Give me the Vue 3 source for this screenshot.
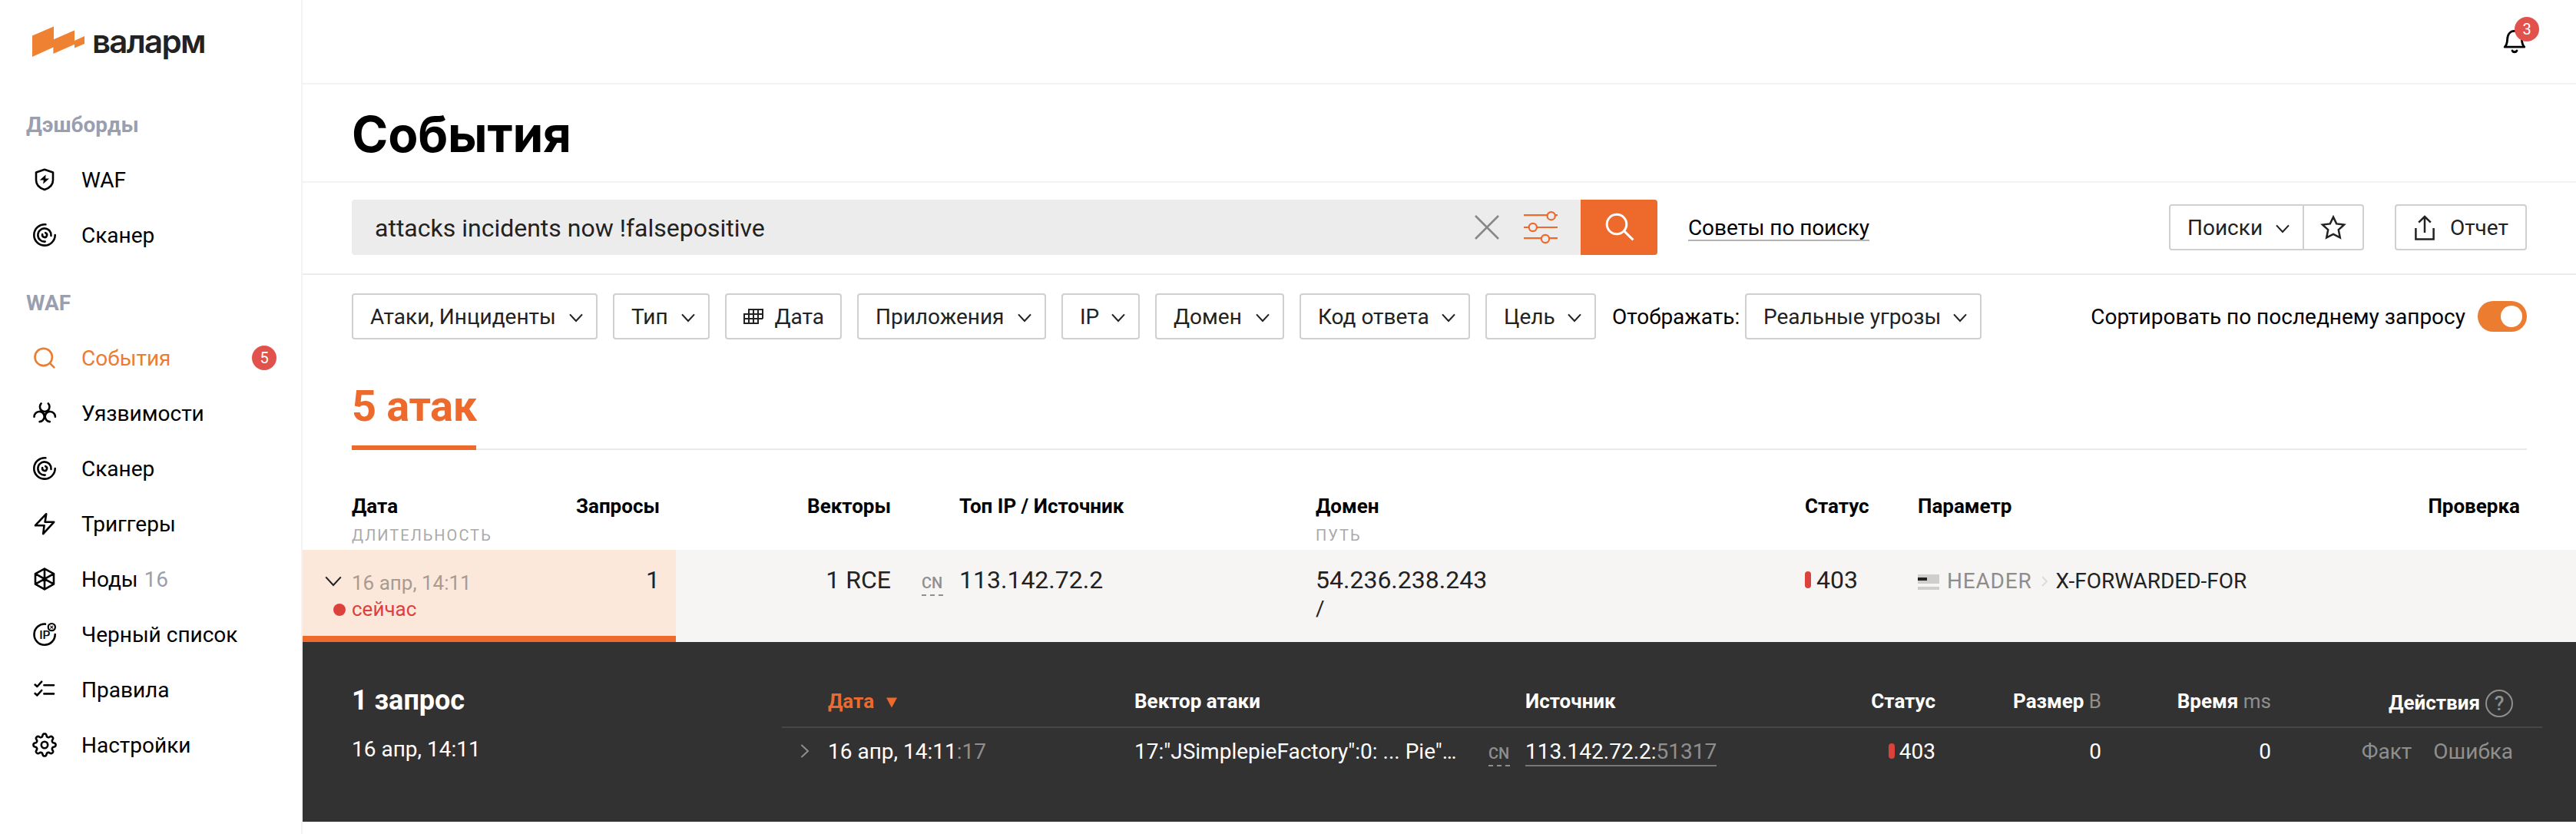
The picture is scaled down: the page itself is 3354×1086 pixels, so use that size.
<script setup>
const sections = [
  {
    title: 'Дэшборды',
    items: [
      { icon: 'shield', label: 'WAF' },
      { icon: 'scanner', label: 'Сканер' },
    ],
  },
  {
    title: 'WAF',
    items: [
      { icon: 'search', label: 'События', active: true, badge: 5 },
      { icon: 'bio', label: 'Уязвимости' },
      { icon: 'scanner', label: 'Сканер' },
      { icon: 'bolt', label: 'Триггеры' },
      { icon: 'nodes', label: 'Ноды', count: 16 },
      { icon: 'blacklist', label: 'Черный список' },
      { icon: 'rules', label: 'Правила' },
      { icon: 'gear', label: 'Настройки' },
    ],
  },
]

const filters = [
  { label: 'Атаки, Инциденты', cls: 'w-type' },
  { label: 'Тип', cls: 'w-kind' },
  { label: 'Дата', cls: 'w-date', calendar: true },
  { label: 'Приложения', cls: 'w-apps' },
  { label: 'IP', cls: 'w-ip' },
  { label: 'Домен', cls: 'w-domain' },
  { label: 'Код ответа', cls: 'w-code' },
  { label: 'Цель', cls: 'w-target' },
]

const strokes = {
  shield: 'M16 2.8 27 6.4V16.4C27 22.6 22.4 26.8 16 29 9.6 26.8 5 22.6 5 16.4V6.4Z',
  scanner:
    'M17.4 2.3A13.7 13.7 0 1 0 29.7 16M24.5 17A8.6 8.6 0 1 0 16.6 24.6M17.2 13.2A3 3 0 1 1 13.2 15.2',
  search: 'M25.9 14.9A11.2 11.2 0 1 1 3.5 14.9 11.2 11.2 0 1 1 25.9 14.9M22.8 22.8 28.4 28.4',
  bio: 'M11.6 3.4A6.3 6.3 0 1 0 20.8 3.4M2.5 20.7A6.6 6.6 0 1 1 9.6 27.1M29.9 20.7A6.6 6.6 0 1 0 22.8 27.1M12.4 14.6 16.2 18 20 14.6',
  bolt: 'M18.2 3.2 4 18.2H15.6L14.2 29.2 28.2 13.8H16.6Z',
  nodes: 'M16 2.6 28 9.2V22.6L16 29.4 4 22.6V9.2ZM16 2.6V29.4M4 9.2 28 22.6M28 9.2 4 22.6',
  blacklist: 'M17 2.6A13.6 13.6 0 1 0 29.7 16',
  rules: 'M3.6 9.6 6.4 12 12.2 5.6M15.4 10.2H28M3.6 21 6.4 23.4 12.2 17M15.4 21.4H28',
  gear: gearPath(),
}

// Smooth eight-tooth outline around the hub
function gearPath() {
  const pts = []
  for (let i = 0; i < 192; i++) {
    const a = (i / 192) * Math.PI * 2
    const r = 12.7 + (1.8 * Math.tanh(1.8 * Math.cos(8 * a))) / Math.tanh(1.8)
    pts.push((16 + r * Math.cos(a)).toFixed(2) + ' ' + (16 + r * Math.sin(a)).toFixed(2))
  }
  return 'M' + pts.join('L') + 'ZM20.2 16A4.2 4.2 0 1 1 11.8 16 4.2 4.2 0 1 1 20.2 16'
}
</script>

<template>
  <div class="app">
    <aside class="sidebar">
      <div class="logo">
        <svg width="68" height="42" viewBox="0 0 68 42">
          <path d="M0 12.4 28 .4V17.3L55 5.5V19L68 13.1V23L55 28.6V23.8L27.4 36V27.6L0 40Z" fill="#ee8132" />
        </svg>
        <span class="logo-text">валарм</span>
      </div>
      <nav v-for="s in sections" :key="s.title" class="section">
        <div class="section-title">{{ s.title }}</div>
        <a v-for="i in s.items" :key="i.label" class="item" :class="{ active: i.active }">
          <svg class="item-icon" width="32" height="32" viewBox="0 0 32 32" fill="none" stroke="currentColor" stroke-width="2.6" stroke-linecap="round" stroke-linejoin="round">
            <path :d="strokes[i.icon]" />
            <path v-if="i.icon === 'shield'" d="M17.6 9.6 9.8 16.6H14.8L14.2 21.4 22 14.6H17.2Z" fill="currentColor" stroke="none" />
            <template v-if="i.icon === 'blacklist'">
              <text x="9.2" y="21.8" font-size="15.5" font-weight="500" fill="currentColor" stroke="none">IP</text>
              <circle cx="25.3" cy="6.6" r="4.6" stroke-width="2.2" />
              <path d="M23.8 5.1 26.8 8.1M26.8 5.1 23.8 8.1" stroke-width="1.1" />
            </template>
          </svg>
          <span class="item-label">{{ i.label }}</span>
          <span v-if="i.count" class="item-count">{{ i.count }}</span>
          <span v-if="i.badge" class="badge item-badge">{{ i.badge }}</span>
        </a>
      </nav>
    </aside>

    <main class="main">
      <header class="topbar">
        <div class="bell">
          <svg width="32" height="34" viewBox="0 0 32 34" fill="none" stroke="#000" stroke-width="2.8" stroke-linejoin="round">
            <path d="M3.2 24.2H28.8C26.4 21.8 25.6 18.8 25.4 14.4 25.2 7.6 21.6 3.4 16 3.4S6.8 7.6 6.6 14.4C6.4 18.8 5.6 21.8 3.2 24.2Z" />
            <path d="M12 28.4A4.2 4.2 0 0 0 20 28.4L16 29.6Z" fill="#000" stroke="none" />
            <path d="M13 29A3.4 3.4 0 0 0 19 29" stroke-linecap="round" />
          </svg>
          <span class="badge bell-badge">3</span>
        </div>
      </header>

      <div class="title"><h1>События</h1></div>

      <div class="searchbar">
        <div class="search">
          <span class="query">attacks incidents now !falsepositive</span>
          <svg width="32" height="32" viewBox="0 0 32 32" stroke="#888" stroke-width="2.6"><path d="M1 1 31 31M31 1 1 31" /></svg>
          <svg class="sliders" width="44" height="44" viewBox="0 0 44 44" fill="#ececec" stroke="#ee6a2c" stroke-width="2.2">
            <path d="M0 6.2H44M0 22H44M0 36.2H44" />
            <circle cx="35.7" cy="7.2" r="5.1" />
            <circle cx="11.8" cy="22" r="5.1" />
            <circle cx="28" cy="37" r="5.1" />
          </svg>
        </div>
        <button class="go">
          <svg width="38" height="38" viewBox="0 0 38 38" fill="none" stroke="#fff" stroke-width="3">
            <circle cx="15" cy="15" r="12.8" />
            <path d="M24.4 23.6 36.4 35.4" />
          </svg>
        </button>
        <a class="tips">Советы по поиску</a>
        <div class="actions">
          <div class="group">
            <div class="btn saved">
              Поиски
              <svg class="chev" width="18" height="12" viewBox="0 0 18 12"><path d="M1 1.4 9 10 17 1.4" /></svg>
            </div>
            <div class="btn star">
              <svg width="34" height="34" viewBox="0 0 34 34" fill="none" stroke="#222" stroke-width="2.5">
                <path d="M17 3.6 21.2 12.4 31 13.6 23.8 20.2 25.8 30.4 17 26 8.2 30.4 10.2 20.2 3 13.6 12.8 12.4Z" />
              </svg>
            </div>
          </div>
          <div class="btn report">
            <svg width="26" height="34" viewBox="0 0 26 34" fill="none" stroke="#222" stroke-width="2.5">
              <path d="M1.4 17V31.6H24.6V17M13 23V2.4M5.2 9.6 13 2 20.8 9.6" />
            </svg>
            Отчет
          </div>
        </div>
      </div>

      <div class="filters">
        <div v-for="f in filters" :key="f.label" class="btn filter" :class="f.cls">
          <svg v-if="f.calendar" width="26" height="20" viewBox="0 0 26 20" fill="none" stroke="#222" stroke-width="2">
            <path d="M7 1H25V13M1 7H25M1 13H25M1 19H19M1 6V20M7 0V20M13 0V20M19 0V20" />
          </svg>
          {{ f.label }}
          <svg v-if="!f.calendar" class="chev" width="18" height="12" viewBox="0 0 18 12"><path d="M1 1.4 9 10 17 1.4" /></svg>
        </div>
        <span class="show">Отображать:</span>
        <div class="btn filter w-real">
          Реальные угрозы
          <svg class="chev" width="18" height="12" viewBox="0 0 18 12"><path d="M1 1.4 9 10 17 1.4" /></svg>
        </div>
        <span class="sort">Сортировать по последнему запросу</span>
        <span class="toggle"><i></i></span>
      </div>

      <div class="tabs"><div class="tab">5 атак</div></div>

      <div class="cols thead">
        <div class="c-date"><b>Дата</b><small>ДЛИТЕЛЬНОСТЬ</small></div>
        <div class="c-count"><b>Запросы</b></div>
        <div class="right"><b>Векторы</b></div>
        <div></div>
        <div><b>Топ IP / Источник</b></div>
        <div><b>Домен</b><small>ПУТЬ</small></div>
        <div><b>Статус</b></div>
        <div><b>Параметр</b></div>
        <div class="right"><b>Проверка</b></div>
      </div>

      <div class="cols row">
        <div class="c-date hot">
          <svg class="chev open" width="22" height="14" viewBox="0 0 22 14"><path d="M1.2 1.4 11 12 20.8 1.4" /></svg>
          <div class="when">16 апр, 14:11</div>
          <div class="now">сейчас</div>
        </div>
        <div class="c-count hot big">1</div>
        <div class="big right">1 RCE</div>
        <div class="flag-cell"><span class="cn">CN</span></div>
        <div class="big">113.142.72.2</div>
        <div class="big">54.236.238.243<div class="path">/</div></div>
        <div class="big code"><i class="bar"></i>403</div>
        <div class="param">
          <svg width="28" height="20" viewBox="0 0 28 20"><path d="M0 0H28V12H0ZM0 16H28V20H0Z" fill="#cfcecc" /><path d="M0 4H12V8H0Z" fill="#222" /></svg>
          <span class="head">HEADER</span>
          <svg class="sep" width="8" height="14" viewBox="0 0 8 14"><path d="M1 1 7 7 1 13" fill="none" stroke="#dedcda" stroke-width="2" /></svg>
          <span>X-FORWARDED-FOR</span>
        </div>
        <div></div>
      </div>

      <section class="detail">
        <div class="summary">
          <h2>1 запрос</h2>
          <p>16 апр, 14:11</p>
        </div>
        <div class="inner">
          <div class="icols ihead">
            <div></div>
            <div class="sorted">Дата<svg width="16" height="14" viewBox="0 0 16 14"><path d="M1 .6H15L8 13.4Z" fill="#ee6a2c" /></svg></div>
            <div>Вектор атаки</div>
            <div></div>
            <div>Источник</div>
            <div class="right">Статус</div>
            <div class="right">Размер <em>B</em></div>
            <div class="right">Время <em>ms</em></div>
            <div class="acts">Действия<span class="help">?</span></div>
          </div>
          <div class="icols irow">
            <div class="expand"><svg width="12" height="18" viewBox="0 0 12 18"><path d="M1.4 1 10 9 1.4 17" fill="none" stroke="#8f8f8f" stroke-width="2" /></svg></div>
            <div>16 апр, 14:11<em>:17</em></div>
            <div>17:"JSimplepieFactory":0: ... Pie"…</div>
            <div class="iflag"><span class="cn">CN</span></div>
            <div><span class="src">113.142.72.2:<em>51317</em></span></div>
            <div class="right icode"><i class="bar"></i>403</div>
            <div class="right">0</div>
            <div class="right">0</div>
            <div class="right"><em>Факт</em><em class="err">Ошибка</em></div>
          </div>
        </div>
      </section>
    </main>
  </div>
</template>

<style>
body {
  background: #fff;
}
</style>

<style scoped>
.app {
  display: flex;
  height: 1086px;
  font-family: Roboto, 'Noto Sans', sans-serif;
  font-size: 28px;
  line-height: 32px;
  color: #222;
  white-space: nowrap;
  overflow: hidden;
}
.app * { box-sizing: border-box; }
svg { display: block; flex: none; }
em, i { font-style: normal; }

.sidebar {
  width: 394px;
  flex: none;
  border-right: 2px solid #f3f3f4;
  color: #000;
}
.logo {
  display: flex;
  height: 110px;
  padding: 34px 0 0 42px;
}
.logo-text {
  margin: -1px 0 0 10px;
  font: 600 42px/42px Inter, sans-serif;
  letter-spacing: -1.7px;
  color: #222;
}
.section { padding-top: 34px; }
.section-title {
  height: 36px;
  margin-bottom: 18px;
  padding-left: 34px;
  line-height: 38px;
  font-weight: 700;
  color: #9a9fb0;
}
.item {
  display: flex;
  align-items: center;
  height: 72px;
  padding: 0 32px 0 42px;
}
.item.active { color: #ec7c30; }
.item-label {
  margin-left: 32px;
  padding-top: 2px;
}
.item-count {
  margin-left: 8px;
  padding-top: 2px;
  color: #9a9fb0;
}
.badge {
  width: 32px;
  height: 32px;
  border-radius: 50%;
  background: #e2524c;
  color: #fff;
  font-size: 20px;
  line-height: 32px;
  text-align: center;
}
.item-badge { margin-left: auto; }

.main {
  flex: 1;
  min-width: 0;
}
.topbar {
  display: flex;
  justify-content: flex-end;
  height: 110px;
  padding: 37px 64px 0 0;
  border-bottom: 2px solid #f3f3f4;
}
.bell { position: relative; }
.bell-badge {
  position: absolute;
  left: 16px;
  top: -15px;
}
.title {
  height: 128px;
  padding: 32px 0 0 64px;
  border-bottom: 2px solid #f3f3f4;
}
h1 {
  margin: 0;
  font: 700 64px/66px Inter, Roboto, sans-serif;
  letter-spacing: -0.2px;
  color: #000;
}

.searchbar {
  display: flex;
  align-items: center;
  height: 120px;
  padding: 0 64px 2px;
  border-bottom: 2px solid #f0ecea;
}
.search {
  display: flex;
  align-items: center;
  width: 1600px;
  height: 72px;
  padding: 0 30px;
  border-radius: 4px 0 0 4px;
  background: #ececec;
}
.query {
  flex: 1;
  padding-top: 2px;
  font-size: 32px;
}
.sliders { margin-left: 32px; }
.go {
  width: 100px;
  height: 72px;
  padding: 0 0 0 32px;
  border: 0;
  border-radius: 0 4px 4px 0;
  background: #ee6a2c;
}
.tips {
  margin: 4px 0 0 40px;
  border-bottom: 2px solid #b2b2b2;
  line-height: 30px;
  letter-spacing: -0.1px;
  color: #000;
}
.actions {
  display: flex;
  margin-left: auto;
}
.group {
  display: flex;
  margin-right: 40px;
}
.btn {
  display: flex;
  align-items: center;
  justify-content: space-between;
  height: 60px;
  padding: 1px 17px 0 22px;
  border: 2px solid #d0d0d0;
  border-radius: 4px;
}
.chev {
  fill: none;
  stroke: #222;
  stroke-width: 2.1;
}
.btn .chev { margin-top: 3px; }
.saved {
  width: 176px;
  border-radius: 4px 0 0 4px;
}
.star {
  width: 80px;
  margin-left: -2px;
  padding: 0;
  justify-content: center;
  border-radius: 0 4px 4px 0;
}
.report {
  width: 172px;
  padding: 1px 22px 0 24px;
}

.filters {
  display: flex;
  align-items: center;
  height: 84px;
  padding: 24px 64px 0;
}
.filter { margin-right: 20px; }
.w-type { width: 320px; }
.w-kind { width: 126px; }
.w-date { width: 152px; padding-right: 21px; }
.w-date svg { margin-top: -2px; }
.w-apps { width: 246px; }
.w-ip { width: 102px; }
.w-domain { width: 168px; }
.w-code { width: 222px; }
.w-target { width: 144px; }
.w-real { width: 308px; }
.show {
  width: 174px;
  padding: 1px 0 0 1px;
  color: #000;
}
.sort {
  margin-left: auto;
  padding-top: 1px;
  color: #000;
}
.toggle {
  width: 64px;
  height: 40px;
  margin-left: 16px;
  padding: 6px;
  border-radius: 20px;
  background: #ec7c30;
}
.toggle i {
  display: block;
  width: 28px;
  height: 28px;
  margin-left: 24px;
  border-radius: 50%;
  background: #fff;
}

.tabs {
  height: 144px;
  margin: 0 64px;
  border-bottom: 2px solid #ece8e6;
}
.tab {
  width: 162px;
  height: 144px;
  padding-top: 55px;
  border-bottom: 6px solid #ee6a2c;
  font-size: 56px;
  line-height: 64px;
  font-weight: 700;
  letter-spacing: -0.4px;
  color: #ee6a2c;
}

.cols {
  display: grid;
  grid-template-columns: 300px 186px 280px 89px 464px 637px 147px 503px 281px;
}
.c-date { padding-left: 64px; }
.c-count {
  padding-right: 21px;
  text-align: right;
}
.right { text-align: right; }
.thead {
  height: 130px;
  padding-top: 57px;
  color: #000;
}
b {
  display: block;
  font-size: 26px;
  font-weight: 700;
}
small {
  display: block;
  margin-top: 6px;
  font-size: 20px;
  letter-spacing: 2px;
  color: #aaa;
}
.row {
  height: 120px;
  background: #f7f5f3;
}
.hot {
  background: #fce8db;
  border-bottom: 8px solid #ee6a2c;
}
.big {
  padding-top: 19px;
  font-size: 32px;
  line-height: 40px;
}
.hot.c-date {
  position: relative;
  padding-top: 27px;
}
.open {
  position: absolute;
  left: 29px;
  top: 34px;
}
.when, .now {
  font-size: 26px;
  line-height: 33px;
}
.when { color: #a89b92; }
.now {
  display: flex;
  align-items: center;
  padding-top: 1px;
  color: #dc423c;
}
.now::before {
  content: '';
  width: 16px;
  height: 16px;
  margin: 1px 8px 0 -24px;
  border-radius: 50%;
  background: #dc423c;
}
.flag-cell { padding: 26px 0 0 40px; }
.cn {
  display: block;
  width: 28px;
  height: 34px;
  line-height: 34px;
  border-bottom: 2px dashed #8f8f8f;
  font-size: 20px;
  font-weight: 500;
  color: #8f8f8f;
}
.path {
  margin-top: 1px;
  font-size: 28px;
  line-height: 34px;
}
.code, .icode {
  display: flex;
}
.bar {
  width: 8px;
  height: 22px;
  margin: 9px 7px 0 0;
  border-radius: 4px;
  background: #dc423c;
}
.param {
  display: flex;
  padding-top: 32px;
}
.param span {
  margin-top: -8px;
  line-height: 34px;
}
.head {
  margin-left: 10px;
  letter-spacing: 0.8px;
  color: #8f8d8b;
}
.sep { margin: 2px 11px 0 12px; }

.detail {
  display: flex;
  height: 234px;
  background: #323232;
  color: #fff;
}
.summary {
  width: 624px;
  padding: 56px 0 0 64px;
}
h2 {
  margin: 0;
  font-size: 36px;
  line-height: 40px;
  font-weight: 700;
}
p { margin: 28px 0 0; }
.inner {
  width: 2292px;
  padding-top: 44px;
}
.icols {
  display: grid;
  grid-template-columns: 60px 399px 461px 48px 334px 200px 216px 221px 315px;
}
.ihead {
  height: 68px;
  border-bottom: 2px solid #474747;
  line-height: 67px;
  font-size: 26px;
  font-weight: 700;
}
.ihead em {
  font-weight: 400;
  color: #8f8f8f;
}
.sorted {
  display: flex;
  color: #ee6a2c;
}
.sorted svg { margin: 28px 0 0 15px; }
.acts {
  display: flex;
  justify-content: flex-end;
  align-items: center;
  padding-top: 2px;
}
.help {
  width: 36px;
  height: 36px;
  margin-left: 7px;
  border: 2px solid #8f8f8f;
  border-radius: 50%;
  line-height: 32px;
  font-weight: 500;
  text-align: center;
  color: #8f8f8f;
}
.irow {
  height: 60px;
  line-height: 61px;
}
.irow em { color: #8f8f8f; }
.irow .err { margin-left: 28px; }
.expand { padding: 21px 0 0 24px; }
.iflag .cn {
  height: 50px;
  line-height: 66px;
}
.src {
  display: inline-block;
  height: 50px;
  border-bottom: 2px solid #777;
}
.icode { justify-content: flex-end; }
.icode .bar {
  height: 20px;
  margin: 20px 6px 0 0;
}
</style>
